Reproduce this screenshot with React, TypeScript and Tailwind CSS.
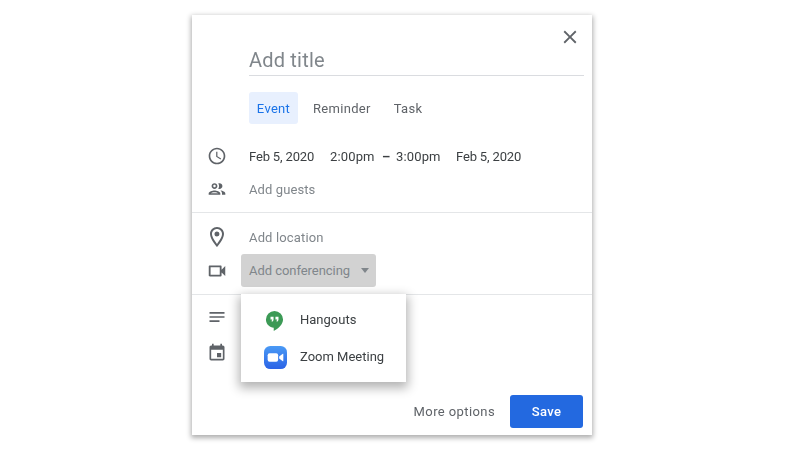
const ICONS = {
  clock:
    "M11.99 2C6.47 2 2 6.48 2 12s4.47 10 9.99 10C17.52 22 22 17.52 22 12S17.52 2 11.99 2zM12 20c-4.42 0-8-3.58-8-8s3.58-8 8-8 8 3.58 8 8-3.58 8-8 8zm.5-13H11v6l5.25 3.15.75-1.23-4.5-2.67z",
  people:
    "M9 13.75c-2.34 0-7 1.17-7 3.5V19h14v-1.75c0-2.33-4.66-3.5-7-3.5zM4.34 17c.84-.58 2.87-1.25 4.66-1.25s3.82.67 4.66 1.25H4.34zM9 12c1.93 0 3.5-1.57 3.5-3.5S10.93 5 9 5 5.5 6.57 5.5 8.5 7.07 12 9 12zm0-5c.83 0 1.5.67 1.5 1.5S9.83 10 9 10s-1.5-.67-1.5-1.5S8.17 7 9 7zm7.04 6.81c1.16.84 1.96 1.96 1.96 3.44V19h4v-1.75c0-2.02-3.5-3.17-5.96-3.44zM15 12c1.93 0 3.5-1.57 3.5-3.5S16.93 5 15 5c-.54 0-1.04.13-1.5.35.63.89 1 1.98 1 3.15s-.37 2.26-1 3.15c.46.22.96.35 1.5.35z",
  place:
    "M12 2C8.13 2 5 5.13 5 9c0 5.25 7 13 7 13s7-7.75 7-13c0-3.87-3.13-7-7-7zM7 9c0-2.76 2.24-5 5-5s5 2.24 5 5c0 2.88-2.88 7.19-5 9.88C9.92 16.21 7 11.85 7 9zm5-2.5a2.5 2.5 0 1 0 0 5 2.5 2.5 0 0 0 0-5z",
  video:
    "M15 8v8H5V8h10m1-2H4c-.55 0-1 .45-1 1v10c0 .55.45 1 1 1h12c.55 0 1-.45 1-1v-3.5l4 4v-11l-4 4V7c0-.55-.45-1-1-1z",
  notes: "M3 18h12v-2H3v2zM3 6v2h18V6H3zm0 7h18v-2H3v2z",
  event:
    "M17 12h-5v5h5v-5zM16 1v2H8V1H6v2H5c-1.11 0-1.99.9-1.99 2L3 19c0 1.1.89 2 2 2h14c1.1 0 2-.9 2-2V5c0-1.1-.9-2-2-2h-1V1h-2zm3 18H5V8h14v11z",
  close:
    "M19 6.41L17.59 5 12 10.59 6.41 5 5 6.41 10.59 12 5 17.59 6.41 19 12 13.41 17.59 19 19 17.59 13.41 12z",
};

function Row({ icon, size, className, children }: { icon: string; size?: string; className: string; children?: React.ReactNode }) {
  return (
    <div className={"flex items-center " + className}>
      <div className="flex w-[57px] shrink-0 justify-center pr-[7px]">
        <svg viewBox="0 0 24 24" className={(size ?? "h-5 w-5") + " fill-[#5f6368]"}>
          <path d={icon} />
        </svg>
      </div>
      {children}
    </div>
  );
}

export default function App() {
  return (
    <div className="h-[456px] w-[800px] overflow-hidden bg-white pl-[192px] pt-[15px] font-['Roboto',sans-serif] text-[#3c4043]">
      <div className="relative flex h-[420px] w-[400px] flex-col bg-white shadow-[0_2px_5px_1px_rgba(0,0,0,0.32)] blur-[0.4px]">
        <div className="flex h-[44px] items-end justify-end pr-[11px]">
          <div className="mb-[11px]">
            <svg viewBox="0 0 24 24" className="h-[22px] w-[22px] fill-[#5f6368]">
              <path d={ICONS.close} />
            </svg>
          </div>
        </div>

        <div className="ml-[57px] mr-[8px] flex h-[17px] items-end border-b border-[#dadce0]">
          <span className="translate-y-[1px] whitespace-nowrap pb-[2px] text-[20px] leading-[28px] tracking-[0.2px] text-[#80868b]">Add title</span>
        </div>

        <div className="ml-[57px] mt-[16px] flex h-[32px] items-center text-[13px] tracking-[0.3px] text-[#5f6368]">
          <div className="flex h-full w-[49px] items-center justify-center rounded-[3px] bg-[#e8f0fe] pt-[1px] text-[#1a73e8]">Event</div>
          <div className="ml-[15px] pt-[1px]">Reminder</div>
          <div className="ml-[23px] pt-[1px]">Task</div>
        </div>

        <Row icon={ICONS.clock} className="mt-[16px] h-[32px]">
          <div className="flex whitespace-nowrap pt-[1px] text-[13px]">
            <span className="w-[81px] tracking-[-0.15px]">Feb 5, 2020</span>
            <span className="w-[52px] tracking-[0.15px]">2:00pm</span>
            <span className="w-[14px] font-bold">–</span>
            <span className="w-[60px] tracking-[0.15px]">3:00pm</span>
            <span className="tracking-[-0.15px]">Feb 5, 2020</span>
          </div>
        </Row>

        <Row icon={ICONS.people} className="mt-[1px] h-[32px]">
          <span className="pt-[1px] text-[13px] tracking-[0.1px] text-[#80868b]">Add guests</span>
        </Row>

        <div className="mt-[7px] h-px bg-[#e4e6e8]" />

        <Row icon={ICONS.place} size="h-6 w-6" className="mt-[8px] h-[32px]">
          <span className="pt-[1px] text-[13px] tracking-[0.15px] text-[#80868b]">Add location</span>
        </Row>

        <Row icon={ICONS.video} size="h-[22px] w-[22px]" className="mt-[1px] h-[33px]">
          <div className="-ml-[8px] flex h-[33px] w-[135px] items-center rounded-[3px] bg-[#d2d2d2] pl-[8px] text-[13px] tracking-[-0.05px] text-[#80868b]">
            <span className="whitespace-nowrap">Add conferencing</span>
            <div className="ml-[11px] h-0 w-0 border-x-[4.5px] border-t-[5px] border-x-transparent border-t-[#80868b]" />
          </div>
        </Row>

        <div className="mt-[7px] h-px bg-[#e4e6e8]" />

        <Row icon={ICONS.notes} className="mt-[6px] h-[32px]" />
        <Row icon={ICONS.event} className="mt-[4px] h-[32px]" />

        <div className="mt-[26px] flex items-center justify-end pr-[9px]">
          <span className="text-[13px] tracking-[0.4px] text-[#5f6368]">More options</span>
          <div className="ml-[15px] flex h-[33px] w-[73px] items-center justify-center rounded-[3px] bg-[#2369e0] text-[13px] font-medium tracking-[0.4px] text-white">Save</div>
        </div>

        <div className="absolute left-[49px] top-[279px] flex h-[88px] w-[165px] flex-col justify-center bg-white pt-[1px] text-[13px] shadow-[0_4px_10px_2px_rgba(0,0,0,0.3)]">
          <div className="flex h-[37px] items-center">
            <div className="flex w-[59px] justify-end pr-[16px]">
              <svg viewBox="0 0 20 22" className="h-[21px] w-[19px]">
                <path d="M10 1a9 9 0 0 0-9 9c0 4.900 4 8.600 8.200 8.600V22c4.600-2.300 9.800-6.800 9.800-12a9 9 0 0 0-9-9z" fill="#3c9a56" />
                <path d="M5.800 7h3.200v3c0 1.300-.8 2.200-1.900 2.400v-1.600c.4-.2.500-.5.500-.8H5.800zM11 7h3.200v3c0 1.300-.8 2.200-1.900 2.400v-1.600c.4-.2.500-.5.500-.8H11z" fill="#fff" />
              </svg>
            </div>
            <span>Hangouts</span>
          </div>
          <div className="flex h-[37px] items-center">
            <div className="flex w-[59px] justify-end pr-[13px]">
              <svg viewBox="0 0 22 22" className="h-[23px] w-[23px]">
                <defs>
                  <linearGradient id="zoomBg" x1="0" y1="0" x2="0" y2="1">
                    <stop offset="0" stopColor="#4a9af5" />
                    <stop offset="1" stopColor="#2b63e6" />
                  </linearGradient>
                </defs>
                <rect width="22" height="22" rx="6" fill="url(#zoomBg)" />
                <rect x="3.500" y="7" width="10" height="8" rx="1.800" fill="#fff" />
                <path d="M14.500 10l3.500-2.600c.3-.2.500-.1.500.3v6.600c0 .4-.2.500-.5.300L14.500 12z" fill="#fff" />
              </svg>
            </div>
            <span>Zoom Meeting</span>
          </div>
        </div>
      </div>
    </div>
  );
}
